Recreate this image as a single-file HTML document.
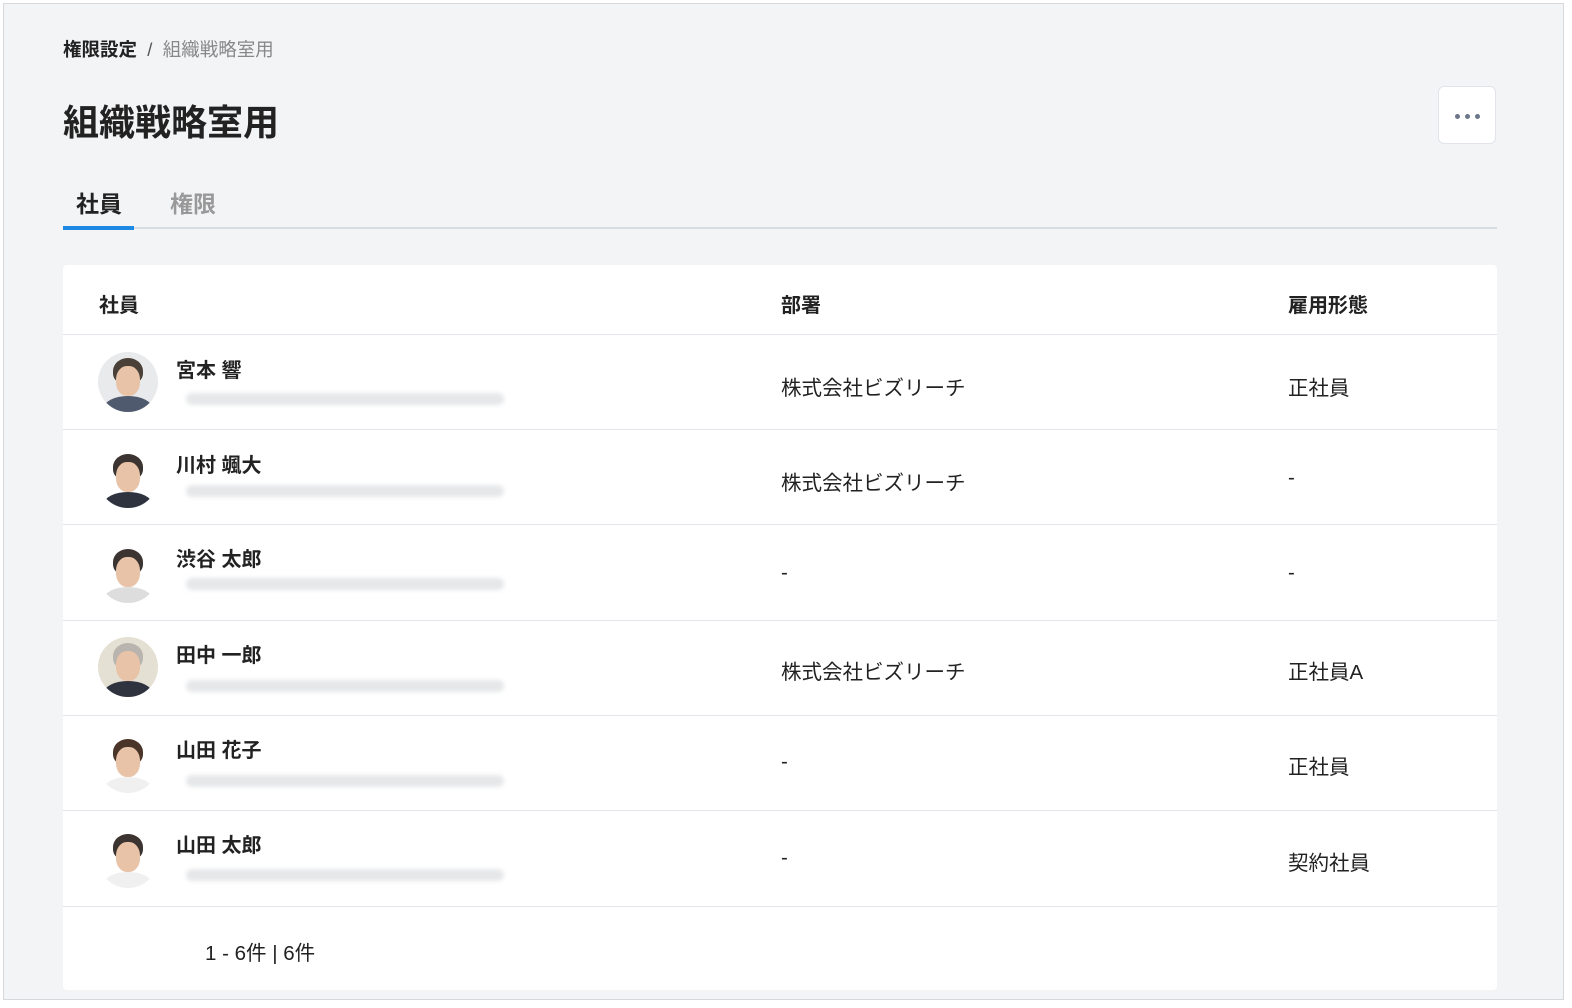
<!DOCTYPE html>
<html><head><meta charset="utf-8"><style>
*{margin:0;padding:0;box-sizing:border-box}
body{width:1572px;height:1008px;background:#fff;font-family:"Liberation Sans","Noto Sans CJK JP",sans-serif;color:#222;position:relative;overflow:hidden}
.frame{position:absolute;left:3px;top:3px;width:1561px;height:997px;background:#f3f4f6;border:1px solid #d6d8db}
.abs{position:absolute;white-space:nowrap}
.bc{left:63px;top:36px;font-size:18.5px}
.bc b{font-weight:700;color:#222}
.bc span{color:#888}
h1{position:absolute;left:63px;top:94px;font-size:36px;font-weight:700;color:#222}
.more{left:1438px;top:86px;width:58px;height:58px;background:#fff;border:1px solid #e1e4e8;border-radius:6px}
.more i{position:absolute;top:27px;width:5px;height:5px;border-radius:50%;background:#6b7688}
.tabs{left:63px;top:227px;width:1434px;height:2px;background:#d8dde2}
.tab1{left:63px;top:226px;width:71px;height:4px;background:#1e88e5}
.t{font-size:23px;font-weight:700;top:185px}
.table{left:63px;top:265px;width:1434px;height:725px;background:#fff;border-radius:4px}
.th{font-size:20px;font-weight:700;top:289px}
.row{left:63px;width:1434px;height:1px;background:#e3e6ea}
.av{width:60px;height:60px;border-radius:50%;left:98px;overflow:hidden;background:#eef0f2}
.av .h{position:absolute;left:15px;top:6px;width:30px;height:26px;border-radius:50% 50% 40% 40%;background:#3b3430}
.av .f{position:absolute;left:18px;top:14px;width:24px;height:30px;border-radius:45%;background:#e8c3a8}
.av .b{position:absolute;left:6px;top:44px;width:48px;height:24px;border-radius:50% 50% 0 0;background:#2f3340}
.nm{left:176px;font-size:20px;font-weight:700}
.em{left:186px;width:318px;height:12px;background:#e6e7e9;border-radius:6px;filter:blur(2px)}
.c{font-size:20.5px}
</style></head><body>
<div class="frame"></div>
<div class="abs bc"><b>権限設定</b> <span style="color:#555">&nbsp;/&nbsp;</span> <span>組織戦略室用</span></div>
<h1>組織戦略室用</h1>
<div class="abs more"><i style="left:16px"></i><i style="left:26px"></i><i style="left:36px"></i></div>
<div class="abs t" style="left:76px">社員</div>
<div class="abs t" style="left:170px;color:#999">権限</div>
<div class="abs tabs"></div><div class="abs tab1"></div>
<div class="abs table"></div>
<div class="abs th" style="left:99px">社員</div>
<div class="abs th" style="left:781px">部署</div>
<div class="abs th" style="left:1288px">雇用形態</div>

<div class="abs row" style="top:334px"></div>
<div class="abs row" style="top:429px"></div>
<div class="abs row" style="top:524px"></div>
<div class="abs row" style="top:620px"></div>
<div class="abs row" style="top:715px"></div>
<div class="abs row" style="top:810px"></div>
<div class="abs row" style="top:906px"></div>

<div class="abs av" style="top:352px;background:#e9eaec"><div class="h" style="background:#4a4038"></div><div class="f"></div><div class="b" style="background:#505a6e"></div></div>
<div class="abs nm" style="top:354px">宮本 響</div><div class="abs em" style="top:393px"></div>
<div class="abs c" style="left:781px;top:371px">株式会社ビズリーチ</div><div class="abs c" style="left:1288px;top:371px">正社員</div>

<div class="abs av" style="top:448px;background:#fff"><div class="h"></div><div class="f"></div><div class="b"></div></div>
<div class="abs nm" style="top:449px">川村 颯大</div><div class="abs em" style="top:485px"></div>
<div class="abs c" style="left:781px;top:466px">株式会社ビズリーチ</div><div class="abs c" style="left:1288px;top:466px">-</div>

<div class="abs av" style="top:543px;background:#fff"><div class="h"></div><div class="f"></div><div class="b" style="background:#ddd"></div></div>
<div class="abs nm" style="top:543px">渋谷 太郎</div><div class="abs em" style="top:578px"></div>
<div class="abs c" style="left:781px;top:561px">-</div><div class="abs c" style="left:1288px;top:561px">-</div>

<div class="abs av" style="top:637px;background:#e5e0d4"><div class="h" style="background:#b9b4ad"></div><div class="f"></div><div class="b"></div></div>
<div class="abs nm" style="top:639px">田中 一郎</div><div class="abs em" style="top:680px"></div>
<div class="abs c" style="left:781px;top:655px">株式会社ビズリーチ</div><div class="abs c" style="left:1288px;top:655px">正社員A</div>

<div class="abs av" style="top:733px;background:#fff"><div class="h" style="background:#4a3528"></div><div class="f"></div><div class="b" style="background:#f0f0f0"></div></div>
<div class="abs nm" style="top:734px">山田 花子</div><div class="abs em" style="top:775px"></div>
<div class="abs c" style="left:781px;top:750px">-</div><div class="abs c" style="left:1288px;top:750px">正社員</div>

<div class="abs av" style="top:828px;background:#fff"><div class="h"></div><div class="f"></div><div class="b" style="background:#f0f0f0"></div></div>
<div class="abs nm" style="top:829px">山田 太郎</div><div class="abs em" style="top:869px"></div>
<div class="abs c" style="left:781px;top:846px">-</div><div class="abs c" style="left:1288px;top:846px">契約社員</div>

<div class="abs c" style="left:205px;top:936px;font-size:20.5px">1 - 6件 | 6件</div>
</body></html>
